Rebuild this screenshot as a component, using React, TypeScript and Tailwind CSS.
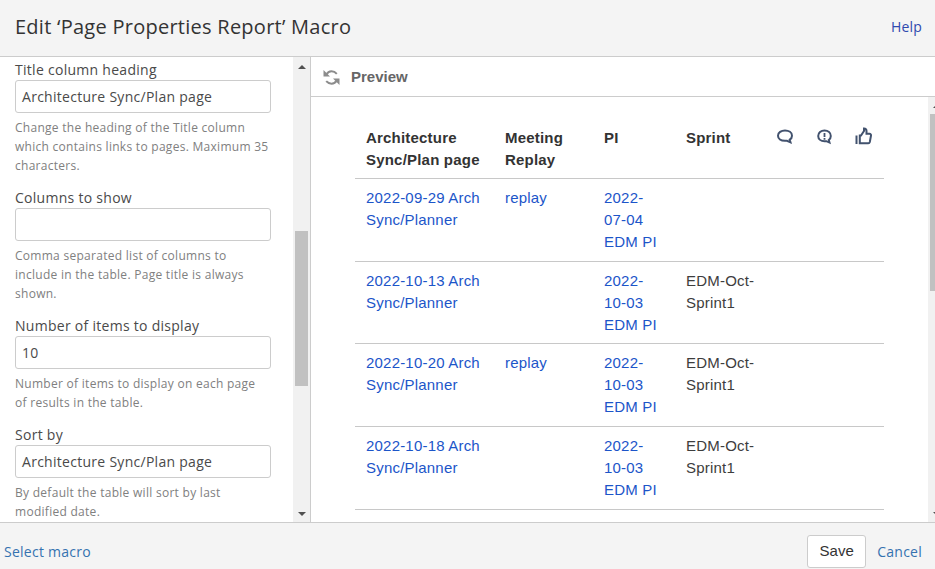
const sans = "font-['Open_Sans',sans-serif]";
const arial = "font-['Liberation_Sans',Arial,sans-serif]";

type Field = { label: string; value: string; help: string[] };

const fields: Field[] = [
  {
    label: "Title column heading",
    value: "Architecture Sync/Plan page",
    help: ["Change the heading of the Title column", "which contains links to pages. Maximum 35", "characters."],
  },
  {
    label: "Columns to show",
    value: "",
    help: ["Comma separated list of columns to", "include in the table. Page title is always", "shown."],
  },
  {
    label: "Number of items to display",
    value: "10",
    help: ["Number of items to display on each page", "of results in the table."],
  },
  {
    label: "Sort by",
    value: "Architecture Sync/Plan page",
    help: ["By default the table will sort by last", "modified date."],
  },
];

type Row = { title: string; replay: boolean; pi: string; sprint: boolean; height: string };

const rows: Row[] = [
  { title: "2022-09-29", replay: true, pi: "07-04", sprint: false, height: "h-[83px]" },
  { title: "2022-10-13", replay: false, pi: "10-03", sprint: true, height: "h-[82px]" },
  { title: "2022-10-20", replay: true, pi: "10-03", sprint: true, height: "h-[83px]" },
  { title: "2022-10-18", replay: false, pi: "10-03", sprint: true, height: "h-[83px]" },
];

function FieldBlock({ field }: { field: Field }) {
  return (
    <div className="mb-[13.1px] tracking-[0.28px]">
      <div className="h-[20px] text-[14px] leading-[20px] text-[#4a4a4a]">{field.label}</div>
      <div className="flex h-[33px] w-[256px] items-center rounded-[3px] border border-[#cccccc] bg-white pl-[6px] text-[14px] text-[#4a4a4a]">
        {field.value}
      </div>
      <div className="mt-[5px] text-[12px] leading-[19px] text-[#808080]">
        {field.help.map((line) => (
          <div key={line}>{line}</div>
        ))}
      </div>
    </div>
  );
}

function CommentIcon() {
  return (
    <svg width="18" height="18" viewBox="0 0 18 18" fill="none" stroke="#42526e" strokeWidth="2">
      <path d="M9 2.500c3.800 0 7 2 7 5.200 0 1.800-1 3.200-2.300 4l.8 2.600-3.600-1.500H9c-4.200 0-7-2-7-5.100s3.200-5.200 7-5.200z" />
    </svg>
  );
}

function InlineCommentIcon() {
  return (
    <svg width="18" height="18" viewBox="0 0 18 18" fill="none" stroke="#42526e" strokeWidth="2">
      <path d="M8.500 2.500c3.600 0 6.300 2.300 6.300 5.500 0 1.800-.8 3.100-2 4l.7 2.600-3.200-1.400H8.500c-3.600 0-6.300-2.100-6.300-5.200s2.700-5.500 6.300-5.500z" />
      <path d="M8.500 5v4M8.500 10v1.800" strokeWidth="1.800" />
    </svg>
  );
}

function ThumbIcon() {
  return (
    <svg width="18" height="18" viewBox="0 0 18 18" fill="none" stroke="#42526e" strokeWidth="2">
      <path d="M1.500 8.500V17" />
      <path d="M4.800 8.500h1.200l3-4.500V1.500c1.500 0 2.500 1 2.500 2.500v2.800h3c1.100 0 1.700.8 1.500 1.700l-1.200 6.500c-.2.800-.7 1.300-1.500 1.300H4.800z" />
    </svg>
  );
}

function RefreshIcon() {
  return (
    <svg width="17" height="17" viewBox="0 0 17 17" fill="none" stroke="#8c8c8c" strokeWidth="2">
      <path d="M3.500 5.500C4.500 3.300 6.300 2.300 8.500 2.300c2.200 0 3.900.9 5.300 2.500" />
      <path d="M13.500 11.500c-1 2.200-2.800 3.200-5 3.200-2.200 0-3.900-.9-5.300-2.500" />
      <path d="M.5 1v6.500H7z" fill="#8c8c8c" stroke="none" />
      <path d="M16.500 16V9.500H10z" fill="#8c8c8c" stroke="none" />
    </svg>
  );
}

function ScrollArrow({ up, color }: { up: boolean; color: string }) {
  return (
    <svg width="8" height="4" viewBox="0 0 8 4" fill={color}>
      <path d={up ? "M4 0l4 4H0z" : "M0 0h8L4 4z"} />
    </svg>
  );
}

function TableRow({ row }: { row: Row }) {
  return (
    <div className={`flex border-b border-[#c8c8c8] pt-[8px] ${row.height}`}>
      <div className="w-[150px] pl-[11px] text-[#1c55c9]">
        <div>{row.title} Arch</div>
        <div>Sync/Planner</div>
      </div>
      <div className="w-[99px] text-[#1c55c9]">{row.replay ? "replay" : ""}</div>
      <div className="w-[82px] text-[#1c55c9]">
        <div>2022-</div>
        <div>{row.pi}</div>
        <div>EDM PI</div>
      </div>
      <div className="text-[#3d3d3d]">
        {row.sprint && (
          <>
            <div>EDM-Oct-</div>
            <div>Sprint1</div>
          </>
        )}
      </div>
    </div>
  );
}

export default function App() {
  return (
    <div className={`flex h-[569px] w-[935px] flex-col overflow-hidden bg-white ${sans}`}>
      <header className="flex h-[57px] shrink-0 items-center justify-between border-b border-[#cccccc] bg-[#f4f4f4] pb-[3px] pl-[15px] pr-[13px]">
        <h1 className="text-[20px] font-normal tracking-[0.26px] text-[#333333]">Edit ‘Page Properties Report’ Macro</h1>
        <a className="mb-[1px] text-[14px] tracking-[0.2px] text-[#2f49ae]">Help</a>
      </header>

      <main className="flex min-h-0 flex-1">
        <section className="flex w-[311px] shrink-0 border-r border-[#cccccc]">
          <div className="w-[293px] overflow-hidden pl-[15px] pt-[3px]">
            {fields.map((f) => (
              <FieldBlock key={f.label} field={f} />
            ))}
          </div>
          <div className="flex w-[17px] flex-col items-center bg-[#f1f1f1]">
            <div className="flex h-[19px] items-center justify-center">
              <ScrollArrow up color="#505050" />
            </div>
            <div className="mt-[155px] h-[155px] w-[13px] bg-[#c1c1c1]" />
            <div className="mt-auto flex h-[17px] items-center justify-center">
              <ScrollArrow up={false} color="#505050" />
            </div>
          </div>
        </section>

        <section className="flex min-w-0 flex-1 flex-col">
          <div className="flex h-[40px] shrink-0 items-center border-b border-[#cccccc] pl-[12px] pt-[2px]">
            <RefreshIcon />
            <span className={`ml-[11px] text-[15px] font-bold text-[#666666] ${arial}`}>Preview</span>
          </div>
          <div className="flex min-h-0 flex-1">
            <div className={`min-w-0 flex-1 overflow-hidden pl-[44px] pt-[30px] text-[15px] leading-[22px] tracking-[0.2px] ${arial}`}>
              <div className="w-[529px]">
                <div className="flex h-[52px] border-b border-[#c8c8c8] font-bold text-[#333333]">
                  <div className="w-[150px] pl-[11px]">
                    <div>Architecture</div>
                    <div>Sync/Plan page</div>
                  </div>
                  <div className="w-[99px]">
                    <div>Meeting</div>
                    <div>Replay</div>
                  </div>
                  <div className="w-[82px]">PI</div>
                  <div className="w-[90px]">Sprint</div>
                  <div className="flex w-[40px] pt-[1px]">
                    <CommentIcon />
                  </div>
                  <div className="flex w-[39px] pt-[1px]">
                    <InlineCommentIcon />
                  </div>
                  <div className="flex w-[18px]">
                    <ThumbIcon />
                  </div>
                </div>
                {rows.map((r) => (
                  <TableRow key={r.title} row={r} />
                ))}
              </div>
            </div>
            <div className="w-[7px] shrink-0 overflow-hidden bg-[#f1f1f1]">
              <div className="flex h-full w-[17px] flex-col items-center">
                <div className="flex h-[17px] items-center justify-center">
                  <ScrollArrow up color="#505050" />
                </div>
                <div className="h-[177px] w-[13px] bg-[#c1c1c1]" />
                <div className="mt-auto flex h-[17px] items-center justify-center">
                  <ScrollArrow up={false} color="#505050" />
                </div>
              </div>
            </div>
          </div>
        </section>
      </main>

      <footer className="flex h-[47px] shrink-0 justify-between border-t border-[#cccccc] bg-[#f4f4f4] pl-[4px] pr-[13px] pt-[12px] text-[14px] tracking-[0.25px]">
        <a className="flex h-[33px] items-center text-[#3572b0]">Select macro</a>
        <div className="flex h-[33px] items-center">
          <button className={`h-[33px] w-[59px] rounded-[3px] border border-[#cccccc] bg-white text-[15px] tracking-normal text-[#333333] ${arial}`}>Save</button>
          <a className="ml-[11px] text-[#3572b0]">Cancel</a>
        </div>
      </footer>
    </div>
  );
}
